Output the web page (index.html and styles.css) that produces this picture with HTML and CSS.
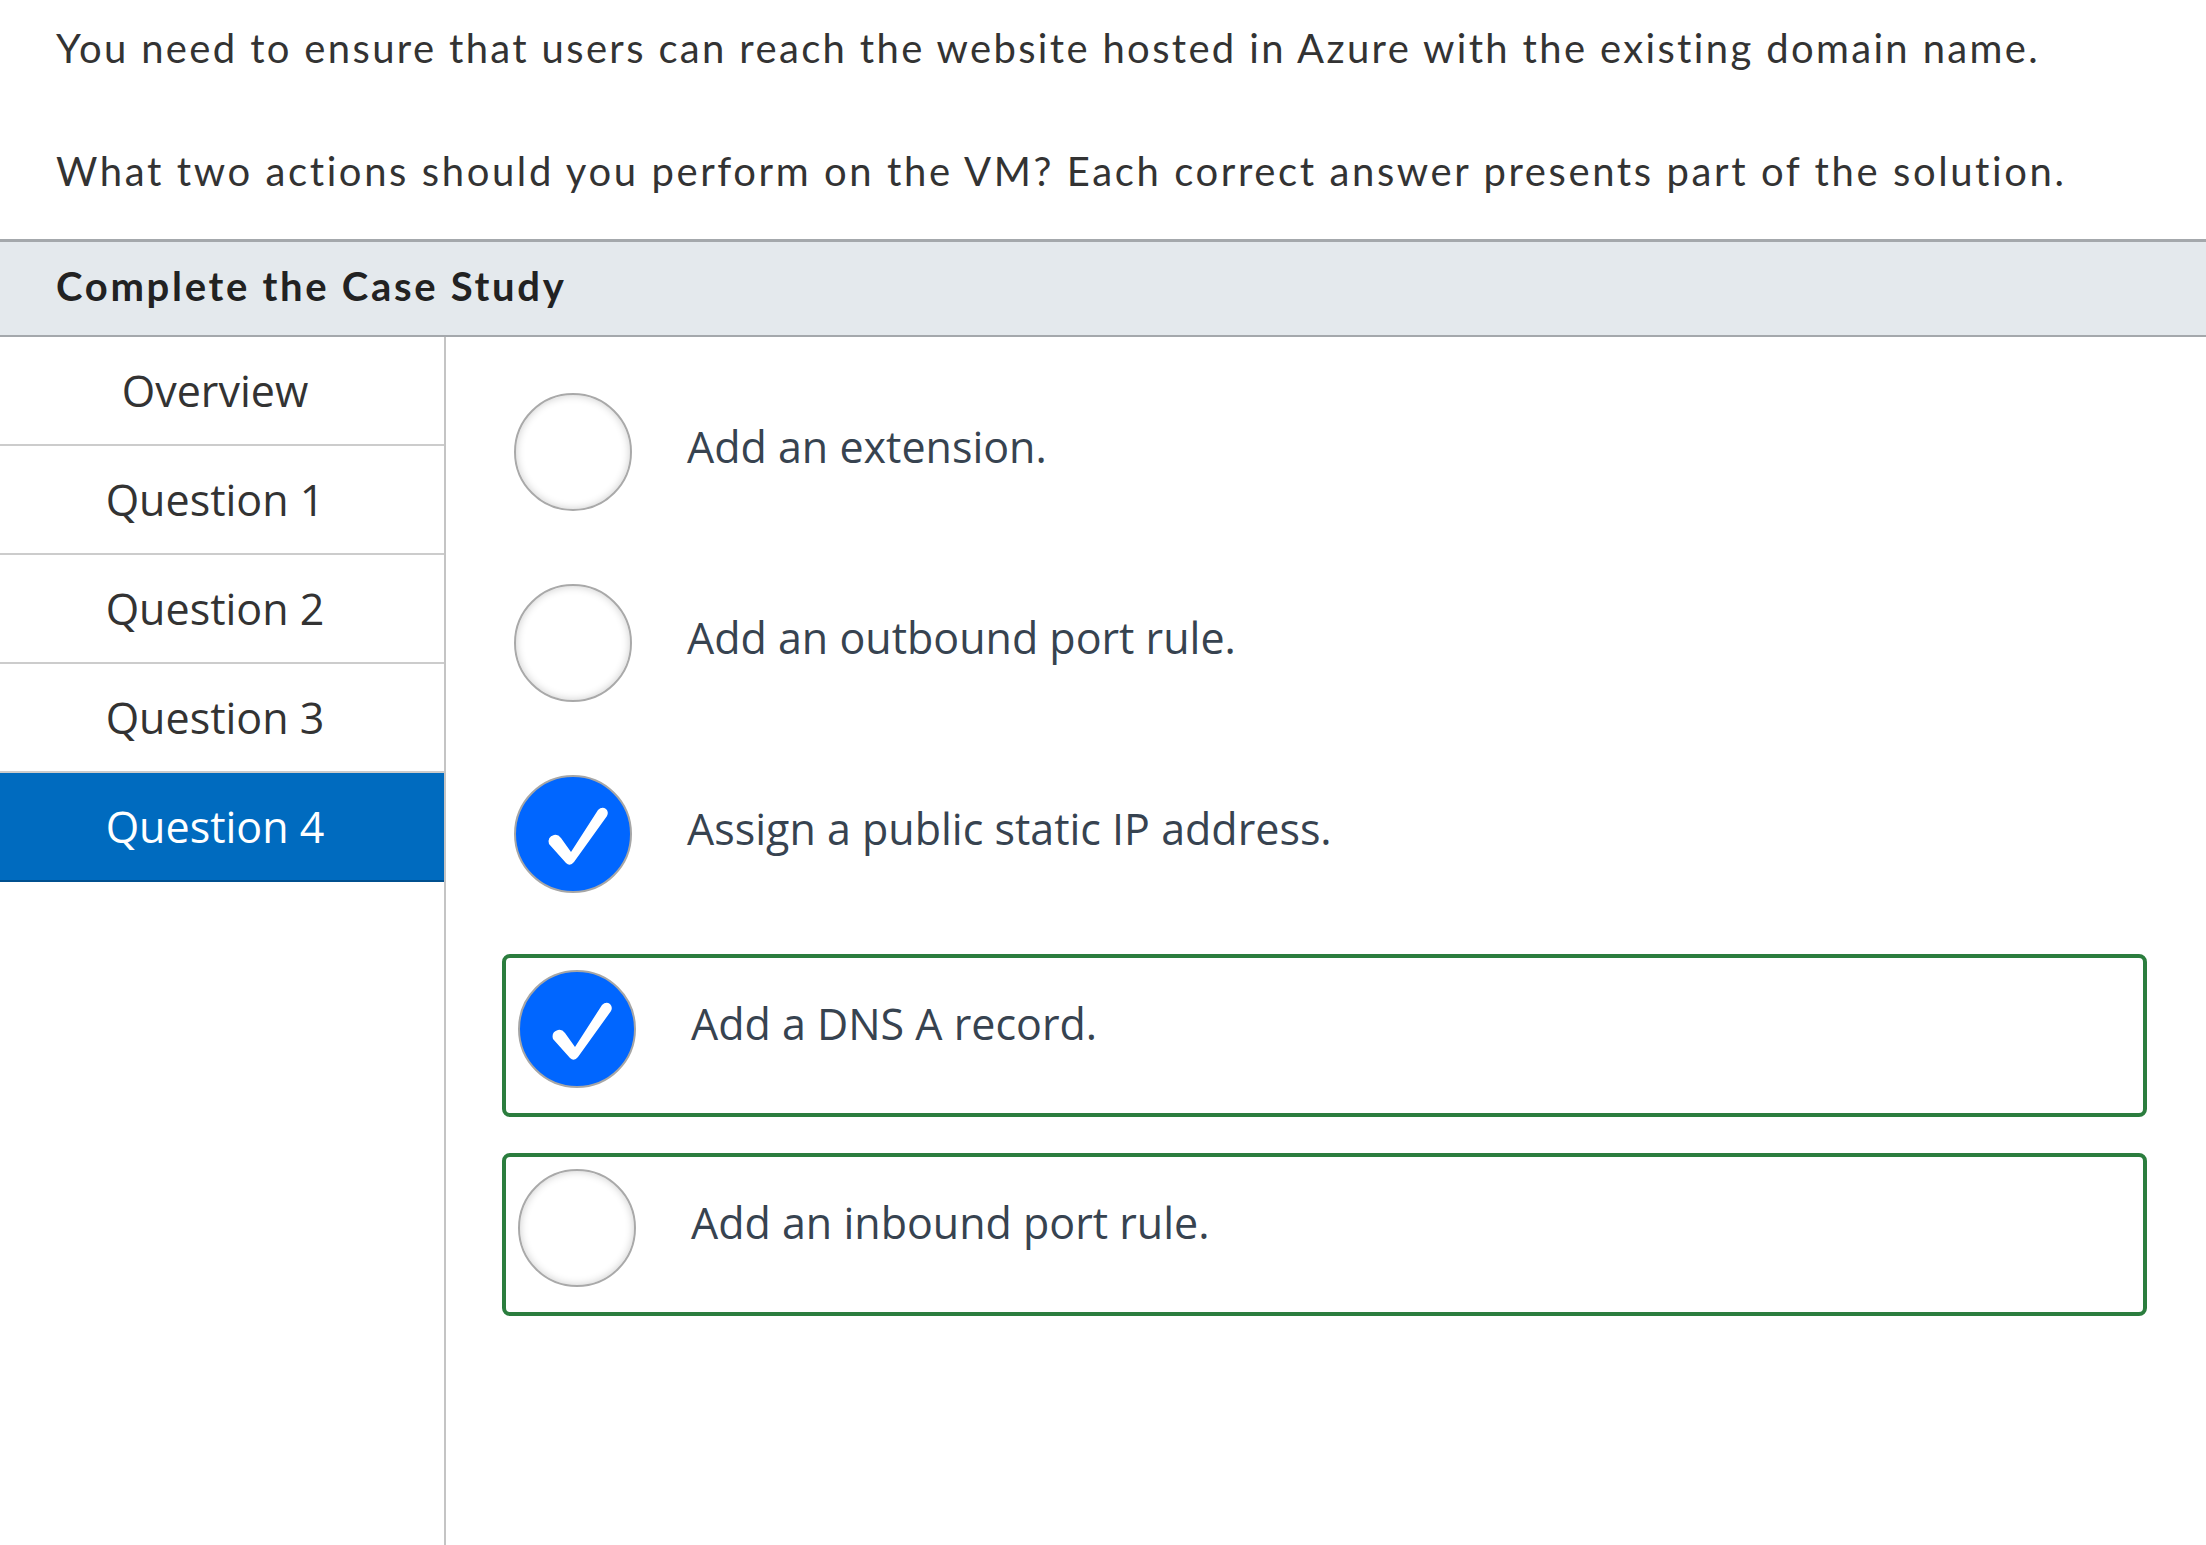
FILE: index.html
```html
<!DOCTYPE html>
<html lang="en">
<head>
<meta charset="utf-8">
<title>Complete the Case Study</title>
<link rel="stylesheet" href="styles.css">
</head>
<body>
  <div class="prompt">
    <p class="prompt-line first">You need to ensure that users can reach the website hosted in Azure with the existing domain name.</p>
    <p class="prompt-line second">What two actions should you perform on the VM? Each correct answer presents part of the solution.</p>
  </div>
  <div class="case-header">Complete the Case Study</div>
  <div class="case-body">
    <nav class="sidebar">
      <div class="nav-item">Overview</div>
      <div class="nav-item">Question 1</div>
      <div class="nav-item">Question 2</div>
      <div class="nav-item">Question 3</div>
      <div class="nav-item active">Question 4</div>
    </nav>
    <main class="options">
      <div class="option">
        <span class="radio"></span>
        <span class="option-text">Add an extension.</span>
      </div>
      <div class="option">
        <span class="radio"></span>
        <span class="option-text">Add an outbound port rule.</span>
      </div>
      <div class="option">
        <span class="radio checked"><svg viewBox="0 0 114 114" class="check"><path d="M33 67 Q31 60 38 58 Q42 57 45 61 L55 75 L82 33 Q86 29 90 32 Q93 35 91 39 L58 85 Q54 90 50 86 Z"/></svg></span>
        <span class="option-text">Assign a public static IP address.</span>
      </div>
      <div class="option correct">
        <span class="radio checked"><svg viewBox="0 0 114 114" class="check"><path d="M33 67 Q31 60 38 58 Q42 57 45 61 L55 75 L82 33 Q86 29 90 32 Q93 35 91 39 L58 85 Q54 90 50 86 Z"/></svg></span>
        <span class="option-text">Add a DNS A record.</span>
      </div>
      <div class="option correct">
        <span class="radio"></span>
        <span class="option-text">Add an inbound port rule.</span>
      </div>
    </main>
  </div>
</body>
</html>
```
FILE: styles.css
```css
html, body {
  margin: 0;
  padding: 0;
  background: #ffffff;
}
body {
  width: 2206px;
  height: 1545px;
  overflow: hidden;
  display: flex;
  flex-direction: column;
}
.prompt {
  padding: 24px 40px 0 56px;
  height: 239px;
  box-sizing: border-box;
}
.prompt-line {
  margin: 0;
  font-family: Lato, "Open Sans", sans-serif;
  font-size: 40px;
  line-height: 48px;
  color: #333333;
  white-space: nowrap;
}
.prompt-line.first {
  letter-spacing: 2.35px;
}
.prompt-line.second {
  margin-top: 75px;
  letter-spacing: 2.6px;
}
.case-header {
  border-top: 3px solid #a4a8ac;
  border-bottom: 2px solid #a4a8ac;
  background: #e4e9ed;
  padding: 20px 56px 25px 56px;
  font-family: Lato, "Open Sans", sans-serif;
  font-weight: 700;
  font-size: 40px;
  line-height: 48px;
  letter-spacing: 2.7px;
  color: #222222;
}
.case-body {
  flex: 1;
  display: flex;
}
.sidebar {
  width: 444px;
  border-right: 2px solid #c4c4c4;
  display: flex;
  flex-direction: column;
}
.nav-item {
  height: 107px;
  border-bottom: 2px solid #cccccc;
  display: flex;
  align-items: center;
  justify-content: center;
  padding-right: 14px;
  font-family: "Open Sans", sans-serif;
  font-size: 43px;
  color: #333333;
}
.nav-item.active {
  background: #006bbf;
  color: #ffffff;
  border-bottom: 2px solid #00508f;
}
.options {
  flex: 1;
  padding: 44px 59px 0 56px;
  display: flex;
  flex-direction: column;
  gap: 36px;
}
.option {
  display: flex;
  align-items: center;
  padding: 12px 12px 25px 12px;
  border-radius: 8px;
}
.option.correct {
  border: 4px solid #2b7d3e;
}
.radio {
  flex: 0 0 auto;
  width: 118px;
  height: 118px;
  box-sizing: border-box;
  border-radius: 50%;
  border: 2px solid #a9a9a9;
  background: #ffffff;
  box-shadow: inset 0 0 9px rgba(0, 0, 0, 0.2);
  display: flex;
}
.radio.checked {
  background: #0066ff;
  box-shadow: none;
  border-color: #a6a6a6;
}
.check {
  width: 100%;
  height: 100%;
}
.check path {
  fill: #ffffff;
  stroke: none;
}
.option-text {
  margin-left: 55px;
  padding-bottom: 11px;
  font-family: "Open Sans", sans-serif;
  font-size: 43px;
  color: #374350;
  white-space: nowrap;
}
```
